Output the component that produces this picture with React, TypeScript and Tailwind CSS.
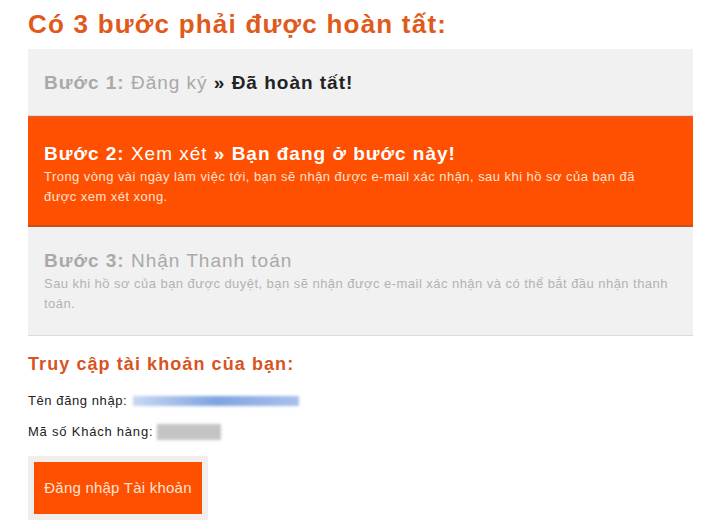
import React from 'react';

type Step = {
  label: string;
  name: string;
  status?: string;
  note?: string;
  active?: boolean;
};

const steps: Step[] = [
  { label: 'Bước 1:', name: 'Đăng ký', status: '» Đã hoàn tất!' },
  {
    label: 'Bước 2:',
    name: 'Xem xét',
    status: '» Bạn đang ở bước này!',
    note: 'Trong vòng vài ngày làm việc tới, bạn sẽ nhận được e-mail xác nhận, sau khi hồ sơ của bạn đã được xem xét xong.',
    active: true,
  },
  {
    label: 'Bước 3:',
    name: 'Nhận Thanh toán',
    note: 'Sau khi hồ sơ của bạn được duyệt, bạn sẽ nhận được e-mail xác nhận và có thể bắt đầu nhận thanh toán.',
  },
];

const StepBox: React.FC<{ step: Step }> = ({ step }) => {
  const box = step.active
    ? 'bg-[#ff4f00] border-t-2 border-t-[#e85a20] border-b-2 border-b-[#c8501c] pt-[25px] pb-[18px]'
    : 'bg-[#f1f1f1] border-b border-b-[#dcdcdc] pt-[23px] pb-[21px]';
  const head = step.active ? 'text-white' : 'text-[#a9a9a9]';
  const note = step.active ? 'text-[#fde3d4]' : 'text-[#b3b3b3]';

  return (
    <div className={`${box} pl-4 pr-3`}>
      <div className={`text-[19px] leading-[22px] tracking-[0.052em] ${head}`}>
        <span className="font-bold">{step.label}</span> {step.name}
        {step.status && (
          <>
            {' '}
            <span className={`font-bold ${step.active ? 'text-white' : 'text-[#222]'}`}>{step.status}</span>
          </>
        )}
      </div>
      {step.note && (
        <p className={`mt-[2px] pr-3 text-[13px] leading-[20px] tracking-[0.035em] ${note}`}>{step.note}</p>
      )}
    </div>
  );
};

export default function App() {
  return (
    <div className="min-h-[531px] w-[707px] bg-white pl-7 pr-[14px] pt-[6px] font-['Liberation_Sans',Arial,sans-serif]">
      <h1 className="text-[26px] font-bold leading-[36px] tracking-[0.047em] text-[#e05a1c]">
        Có 3 bước phải được hoàn tất:
      </h1>

      <div className="mt-[7px] flex flex-col">
        {steps.map((step) => (
          <StepBox key={step.label} step={step} />
        ))}
      </div>

      <h2 className="mt-[16px] text-[18px] font-bold leading-[24px] tracking-[0.06em] text-[#d9531e]">
        Truy cập tài khoản của bạn:
      </h2>

      <div className="mt-[15px] flex items-center text-[13px] leading-[20px] tracking-[0.045em] text-[#222]">
        <span>Tên đăng nhập:</span>
        <span className="ml-[6px] h-[10px] w-[166px] bg-gradient-to-r from-[#c8d8f2] via-[#7fa3e0] to-[#a9c0ec] blur-[1.5px]" />
      </div>

      <div className="mt-[11px] flex items-center text-[13px] leading-[20px] tracking-[0.06em] text-[#222]">
        <span>Mã số Khách hàng:</span>
        <span className="ml-[4px] h-[16px] w-[64px] bg-[#c4c4c4] blur-[1.5px]" />
      </div>

      <div className="mt-[14px] inline-block bg-[#f3eeee] p-[6px]">
        <button className="h-[52px] w-[168px] bg-[#ff4f00] text-[15px] tracking-[0.015em] text-[#fde3d4]">
          Đăng nhập Tài khoản
        </button>
      </div>
    </div>
  );
}
